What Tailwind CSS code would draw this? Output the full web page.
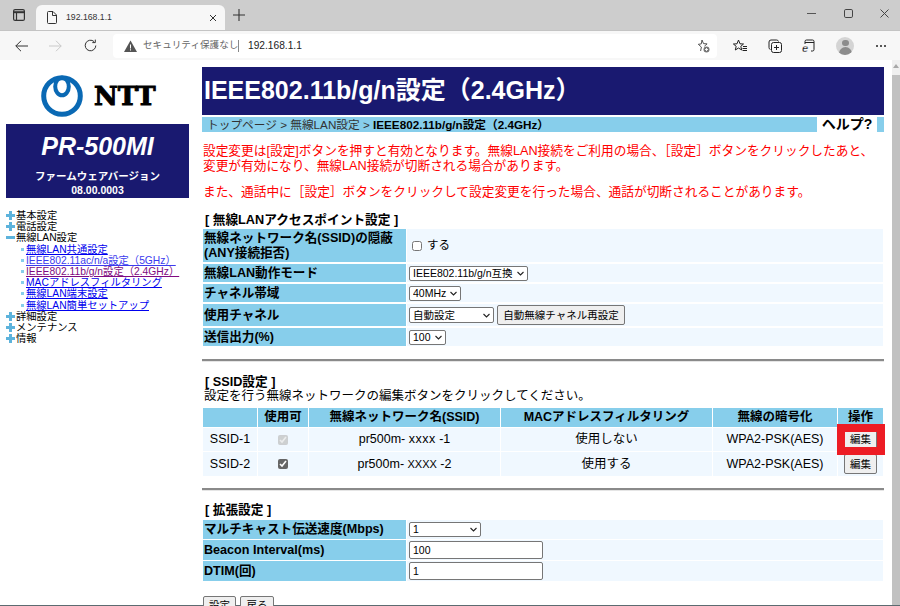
<!DOCTYPE html>
<html lang="ja">
<head>
  <meta charset="UTF-8">
  <title>192.168.1.1</title>
  <script src="https://cdn.jsdelivr.net/npm/@tailwindcss/browser@4"></script>
</head>
<body class="overflow-hidden bg-white font-['Liberation_Sans','Noto_Sans_CJK_JP',sans-serif] text-black">
<div class="relative flex h-[606px] w-[900px] flex-col overflow-hidden">

  <!-- tab strip -->
  <div class="flex h-[30px] shrink-0 items-end bg-[#cdcdcd]">
    <div class="flex h-[30px] w-[36px] items-center justify-center pl-[1px] pb-[1px]">
      <svg width="12" height="12" viewBox="0 0 12 12" fill="none" stroke="#333" stroke-width="1.2"><rect x=".6" y=".6" width="10.8" height="10.8" rx="1.5"/><path d="M.6 3.2h10.8" stroke-width="2"/><path d="M3.5 3v8"/></svg>
    </div>
    <div class="flex h-[25px] w-[189px] items-center rounded-t-[6px] bg-[#f7f7f7] pl-[11px] pr-[8px]">
      <svg width="10" height="13" viewBox="0 0 10 13" fill="none" stroke="#333" stroke-width="1"><path d="M.5 1.5a1 1 0 0 1 1-1h4.5l3.5 3.5v7.500a1 1 0 0 1-1 1h-7a1 1 0 0 1-1-1z"/><path d="M5.500.5v4h4"/></svg>
      <span class="ml-[9px] flex-1 text-[8.7px] text-[#333]">192.168.1.1</span>
      <svg width="8" height="8" viewBox="0 0 8 8" stroke="#333" stroke-width="1"><path d="M1 1l6 6M7 1l-6 6"/></svg>
    </div>
    <div class="flex h-[30px] w-[28px] items-center justify-center pb-[1px]">
      <svg width="12" height="12" viewBox="0 0 12 12" stroke="#333" stroke-width="1.1"><path d="M6 0v12M0 6h12"/></svg>
    </div>
    <div class="flex h-[30px] flex-1 items-center justify-end pb-[3px]">
      <svg class="mr-[28px]" width="9" height="9" viewBox="0 0 9 9" stroke="#555" stroke-width="1"><path d="M0 4.500h9"/></svg>
      <svg class="mr-[27px]" width="9" height="9" viewBox="0 0 9 9" fill="none" stroke="#444" stroke-width="1"><rect x=".5" y=".5" width="8" height="8" rx="1.300"/></svg>
      <svg class="mr-[11px]" width="9" height="9" viewBox="0 0 9 9" stroke="#444" stroke-width="1"><path d="M.5.5l8 8M8.500.5l-8 8"/></svg>
    </div>
  </div>

  <!-- toolbar -->
  <div class="flex h-[30px] shrink-0 items-center border-t border-[#c4c4c4] bg-[#f7f7f7]">
    <div class="flex w-[113px] items-center pl-[15px]">
      <svg width="13" height="12" viewBox="0 0 13 12" fill="none" stroke="#333" stroke-width="1"><path d="M13 6H.8M6 .8L.8 6 6 11.200"/></svg>
      <svg class="ml-[21px]" width="13" height="12" viewBox="0 0 13 12" fill="none" stroke="#c9c9c9" stroke-width="1"><path d="M0 6h12.200M7 .8L12.200 6 7 11.200"/></svg>
      <svg class="ml-[22px]" width="13" height="13" viewBox="0 0 13 13" fill="none" stroke="#333" stroke-width="1"><path d="M11.800 6.500a5.300 5.300 0 1 1-1.700-3.900M11.300.6v3h-3"/></svg>
    </div>
    <div class="flex h-[24px] w-[604px] items-center rounded-[4px] bg-white pl-[11px] pr-[7px]">
      <svg width="13" height="12" viewBox="0 0 13 12"><path d="M6.500.5L13 12H0z" fill="#555"/><path d="M6 4.500h1v4H6zM6 9.300h1v1.200H6z" fill="#fff"/></svg>
      <span class="ml-[6px] w-[95px] whitespace-nowrap text-[9.6px] text-[#666]">セキュリティ保護なし</span>
      <span class="h-[12px] w-px bg-[#888]"></span>
      <span class="ml-[9px] flex-1 text-[10.2px] text-[#222]">192.168.1.1</span>
      <svg width="14" height="14" viewBox="0 0 14 14" fill="none" stroke="#444" stroke-width=".9"><path d="M6 1l1.500 3.600 3.600.3-2.700 2.300M4.600 12l.8-3.900L2.300 5.300l3-.4L6 1"/><circle cx="10.500" cy="10.500" r="3" fill="#777" stroke="none"/><path d="M10.500 9v3M9 10.500h3" stroke="#fff"/></svg>
    </div>
    <div class="flex flex-1 items-center pl-[16px]">
      <svg width="14" height="14" viewBox="0 0 14 14" fill="none" stroke="#222" stroke-width="1"><path d="M5.500 1l1.500 3.800 3.500.2-2.700 2.300.9 3.700-3.200-2-3.200 2 .9-3.700L.4 5l3.600-.2z"/><path d="M10 7.500h4M9.500 9.500h4.500M9.500 11.500h4.500"/></svg>
      <svg class="ml-[21px]" width="14" height="14" viewBox="0 0 14 14" fill="none" stroke="#222" stroke-width="1"><path d="M2.500 10.500A2 2 0 0 1 1 8.500V3a2 2 0 0 1 2-2h5.500a2 2 0 0 1 2 1.500"/><rect x="3.500" y="3.500" width="10" height="10" rx="2"/><path d="M8.500 6v5M6 8.500h5"/></svg>
      <svg class="ml-[20px]" width="13" height="14" viewBox="0 0 13 14" fill="none" stroke="#222" stroke-width="1"><path d="M3 5V2.500a1.500 1.500 0 0 1 1.500-1.500h6A1.500 1.500 0 0 1 12 2.500v8a1.500 1.500 0 0 1-1.500 1.500H9M3 3.500h9"/><text x="0" y="13" font-family="Liberation Sans" font-size="11" font-weight="bold" font-style="italic" fill="#111" stroke="#f7f7f7" stroke-width=".4">e</text></svg>
      <div class="ml-[21px] flex h-[18px] w-[18px] flex-col items-center overflow-hidden rounded-full bg-[#d4d4d4]">
        <span class="mt-[3px] h-[7px] w-[7px] rounded-full bg-[#8c8c8c]"></span>
        <span class="mt-[1px] h-[8px] w-[13px] rounded-t-full bg-[#8c8c8c]"></span>
      </div>
      <div class="ml-[22px] flex gap-[2px]">
        <span class="h-[2px] w-[2px] rounded-full bg-[#222]"></span>
        <span class="h-[2px] w-[2px] rounded-full bg-[#222]"></span>
        <span class="h-[2px] w-[2px] rounded-full bg-[#222]"></span>
      </div>
    </div>
  </div>

  <!-- page -->
  <div class="flex min-h-0 flex-1 border-b border-[#5c6b70]">
    <!-- left menu -->
    <aside class="w-[202px] shrink-0 pt-[15px]">
      <div class="flex h-[42px] items-center pl-[41px]">
        <svg width="42" height="42" viewBox="0 0 42 42" fill="none" stroke="#0a69b4"><circle cx="21" cy="21" r="18.300" stroke-width="5"/><ellipse cx="21" cy="11.500" rx="6.800" ry="8.800" stroke-width="4"/></svg>
        <span class="ml-[11px] font-['DejaVu_Serif',serif] text-[26px] leading-none font-bold [-webkit-text-stroke:1px_black]">NTT</span>
      </div>
      <div class="mt-[7px] ml-[6px] flex h-[74px] w-[183px] flex-col items-center bg-[#191970] pt-[7px] text-white">
        <div class="text-[25px] leading-[30px] font-bold italic">PR-500MI</div>
        <div class="mt-[8px] text-[10.5px] leading-[14px] font-bold">ファームウェアバージョン</div>
        <div class="text-[10.5px] leading-[14px] font-bold">08.00.0003</div>
      </div>
      <nav class="mt-[12px] ml-[6px] text-[10.3px] leading-[11.200px] whitespace-nowrap">
        <div class="flex h-[11.200px] items-center"><span class="mr-[1px] h-[9px] w-[9px] shrink-0 bg-[linear-gradient(#5db3dc,#5db3dc),linear-gradient(#5db3dc,#5db3dc)] bg-[length:100%_3px,3px_100%] bg-center bg-no-repeat"></span>基本設定</div>
        <div class="flex h-[11.200px] items-center"><span class="mr-[1px] h-[9px] w-[9px] shrink-0 bg-[linear-gradient(#5db3dc,#5db3dc),linear-gradient(#5db3dc,#5db3dc)] bg-[length:100%_3px,3px_100%] bg-center bg-no-repeat"></span>電話設定</div>
        <div class="flex h-[11.200px] items-center"><span class="mr-[1px] h-[3px] w-[9px] shrink-0 bg-[#5db3dc]"></span>無線LAN設定</div>
        <div class="flex h-[11.200px] items-center pl-[15px]"><span class="mr-[2px] h-[3px] w-[3px] shrink-0 bg-[#87ceeb]"></span><a href="#" class="text-[#0000ee] underline">無線LAN共通設定</a></div>
        <div class="flex h-[11.200px] items-center pl-[15px]"><span class="mr-[2px] h-[3px] w-[3px] shrink-0 bg-[#87ceeb]"></span><a href="#" class="text-[#3b3bee] underline">IEEE802.11ac/n/a設定（5GHz）</a></div>
        <div class="flex h-[11.200px] items-center pl-[15px]"><span class="mr-[2px] h-[3px] w-[3px] shrink-0 bg-[#87ceeb]"></span><a href="#" class="text-[#800a80] underline">IEEE802.11b/g/n設定（2.4GHz）</a></div>
        <div class="flex h-[11.200px] items-center pl-[15px]"><span class="mr-[2px] h-[3px] w-[3px] shrink-0 bg-[#87ceeb]"></span><a href="#" class="text-[#0000ee] underline">MACアドレスフィルタリング</a></div>
        <div class="flex h-[11.200px] items-center pl-[15px]"><span class="mr-[2px] h-[3px] w-[3px] shrink-0 bg-[#87ceeb]"></span><a href="#" class="text-[#0000ee] underline">無線LAN端末設定</a></div>
        <div class="flex h-[11.200px] items-center pl-[15px]"><span class="mr-[2px] h-[3px] w-[3px] shrink-0 bg-[#87ceeb]"></span><a href="#" class="text-[#0000ee] underline">無線LAN簡単セットアップ</a></div>
        <div class="flex h-[11.200px] items-center"><span class="mr-[1px] h-[9px] w-[9px] shrink-0 bg-[linear-gradient(#5db3dc,#5db3dc),linear-gradient(#5db3dc,#5db3dc)] bg-[length:100%_3px,3px_100%] bg-center bg-no-repeat"></span>詳細設定</div>
        <div class="flex h-[11.200px] items-center"><span class="mr-[1px] h-[9px] w-[9px] shrink-0 bg-[linear-gradient(#5db3dc,#5db3dc),linear-gradient(#5db3dc,#5db3dc)] bg-[length:100%_3px,3px_100%] bg-center bg-no-repeat"></span>メンテナンス</div>
        <div class="flex h-[11.200px] items-center"><span class="mr-[1px] h-[9px] w-[9px] shrink-0 bg-[linear-gradient(#5db3dc,#5db3dc),linear-gradient(#5db3dc,#5db3dc)] bg-[length:100%_3px,3px_100%] bg-center bg-no-repeat"></span>情報</div>
      </nav>
    </aside>

    <!-- main -->
    <main class="w-[682px] shrink-0 pt-[7px]">
      <h1 class="flex h-[48px] items-center bg-[#191970] pl-[2px] text-[25px] font-bold text-white">IEEE802.11b/g/n設定（2.4GHz）</h1>
      <div class="mt-[2px] flex h-[15px] items-center bg-[#87ceeb] pl-[5px] text-[11.7px] whitespace-nowrap text-[#333]">
        <span class="w-[610px]">トップページ &gt; 無線LAN設定 &gt; <b class="text-black">IEEE802.11b/g/n設定（2.4GHz）</b></span>
        <span class="flex h-[15px] w-[60px] items-center justify-center bg-white text-[14px] font-bold text-black">ヘルプ?</span>
      </div>

      <div class="mt-[12px] pl-[1px] text-[12.7px] leading-[15px] whitespace-nowrap text-[#f00]">
        <p>設定変更は[設定]ボタンを押すと有効となります。無線LAN接続をご利用の場合、［設定］ボタンをクリックしたあと、</p>
        <p>変更が有効になり、無線LAN接続が切断される場合があります。</p>
        <p class="mt-[11px]">また、通話中に［設定］ボタンをクリックして設定変更を行った場合、通話が切断されることがあります。</p>
      </div>

      <h2 class="mt-[13px] pl-[3px] text-[12.7px] leading-[14px] font-bold">[ 無線LANアクセスポイント設定 ]</h2>
      <table class="w-[682px] table-fixed border-separate border-spacing-x-[1px] border-spacing-y-[2px] text-[12.6px] leading-[15px]">
        <colgroup><col class="w-[203px]"><col></colgroup>
        <tr class="h-[33px]">
          <th class="bg-[#87ceeb] pl-[1px] text-left font-bold">無線ネットワーク名(SSID)の隠蔽<br>(ANY接続拒否)</th>
          <td class="bg-[#f0f8ff] pl-[5px]"><label class="flex items-center"><input type="checkbox" class="h-[10px] w-[10px]"><span class="ml-[5px] text-[11.5px]">する</span></label></td>
        </tr>
        <tr class="h-[18px]">
          <th class="bg-[#87ceeb] pl-[1px] text-left font-bold">無線LAN動作モード</th>
          <td class="bg-[#f0f8ff] pl-[2px]"><span class="relative flex w-[119px]"><select class="h-[15px] w-full appearance-none rounded-[2px] border border-[#767676] bg-white pl-[3px] text-[10.5px] leading-[13px]"><option>IEEE802.11b/g/n互換</option></select><svg class="absolute top-[5px] right-[4px]" width="7" height="5" viewBox="0 0 7 5" fill="none" stroke="#222" stroke-width="1.100"><path d="M.5 1l3 3 3-3"/></svg></span></td>
        </tr>
        <tr class="h-[18px]">
          <th class="bg-[#87ceeb] pl-[1px] text-left font-bold">チャネル帯域</th>
          <td class="bg-[#f0f8ff] pl-[2px]"><span class="relative flex w-[52px]"><select class="h-[15px] w-full appearance-none rounded-[2px] border border-[#767676] bg-white pl-[3px] text-[10.5px] leading-[13px]"><option>40MHz</option></select><svg class="absolute top-[5px] right-[4px]" width="7" height="5" viewBox="0 0 7 5" fill="none" stroke="#222" stroke-width="1.100"><path d="M.5 1l3 3 3-3"/></svg></span></td>
        </tr>
        <tr class="h-[22px]">
          <th class="bg-[#87ceeb] pl-[1px] text-left font-bold">使用チャネル</th>
          <td class="bg-[#f0f8ff] pl-[2px]"><div class="flex items-center"><span class="relative flex w-[85px]"><select class="h-[16px] w-full appearance-none rounded-[2px] border border-[#767676] bg-white pl-[3px] text-[10.5px] leading-[13px]"><option>自動設定</option></select><svg class="absolute top-[6px] right-[4px]" width="7" height="5" viewBox="0 0 7 5" fill="none" stroke="#222" stroke-width="1.100"><path d="M.5 1l3 3 3-3"/></svg></span><button class="ml-[3px] h-[20px] w-[128px] rounded-[2px] border border-[#767676] bg-[#efefef] text-[10.5px]">自動無線チャネル再設定</button></div></td>
        </tr>
        <tr class="h-[18px]">
          <th class="bg-[#87ceeb] pl-[1px] text-left font-bold">送信出力(%)</th>
          <td class="bg-[#f0f8ff] pl-[2px]"><span class="relative flex w-[37px]"><select class="h-[15px] w-full appearance-none rounded-[2px] border border-[#767676] bg-white pl-[3px] text-[10.5px] leading-[13px]"><option>100</option></select><svg class="absolute top-[5px] right-[4px]" width="7" height="5" viewBox="0 0 7 5" fill="none" stroke="#222" stroke-width="1.100"><path d="M.5 1l3 3 3-3"/></svg></span></td>
        </tr>
      </table>

      <hr class="mt-[11px] border-0 border-t-2 border-b border-t-[#8a8a8a] border-b-[#e5e5e5]">

      <h2 class="mt-[13px] pl-[3px] text-[12.7px] leading-[14px] font-bold">[ SSID設定 ]</h2>
      <p class="pl-[2px] text-[12.500px] leading-[14px]">設定を行う無線ネットワークの編集ボタンをクリックしてください。</p>
      <table class="mt-[4px] w-[682px] table-fixed border-separate border-spacing-x-[1px] border-spacing-y-[1px] text-center text-[12.500px] leading-[15px]">
        <colgroup><col class="w-[54px]"><col class="w-[50px]"><col class="w-[191px]"><col class="w-[211px]"><col class="w-[124px]"><col></colgroup>
        <tr class="h-[19px] bg-[#87ceeb] font-bold">
          <th></th><th>使用可</th><th>無線ネットワーク名(SSID)</th><th>MACアドレスフィルタリング</th><th>無線の暗号化</th><th>操作</th>
        </tr>
        <tr class="h-[23px] bg-[#f0f8ff]">
          <td>SSID-1</td>
          <td><input type="checkbox" checked disabled class="h-[10px] w-[10px] align-middle"></td>
          <td>pr500m- <span class="tracking-[0.5px]">xxxx</span> -1</td>
          <td>使用しない</td>
          <td>WPA2-PSK(AES)</td>
          <td><button class="h-[20px] w-[33px] rounded-[2px] border border-[#767676] bg-[#efefef] text-[10.5px]">編集</button></td>
        </tr>
        <tr class="h-[24px] bg-[#f0f8ff]">
          <td>SSID-2</td>
          <td><input type="checkbox" checked class="h-[10px] w-[10px] align-middle accent-[#666]"></td>
          <td>pr500m- <span class="text-[11px]">XXXX</span> -2</td>
          <td>使用する</td>
          <td>WPA2-PSK(AES)</td>
          <td><button class="h-[20px] w-[33px] rounded-[2px] border border-[#767676] bg-[#efefef] text-[10.5px]">編集</button></td>
        </tr>
      </table>

      <hr class="mt-[11px] border-0 border-t-2 border-b border-t-[#8a8a8a] border-b-[#e5e5e5]">

      <h2 class="mt-[12px] pl-[3px] text-[12.7px] leading-[14px] font-bold">[ 拡張設定 ]</h2>
      <table class="mt-[2px] w-[682px] table-fixed border-separate border-spacing-x-[1px] border-spacing-y-[1.500px] text-[12.6px] leading-[15px]">
        <colgroup><col class="w-[203px]"><col></colgroup>
        <tr class="h-[19px]">
          <th class="bg-[#87ceeb] pl-[1px] text-left font-bold">マルチキャスト伝送速度(Mbps)</th>
          <td class="bg-[#f0f8ff] pl-[2px]"><span class="relative flex w-[72px]"><select class="h-[15px] w-full appearance-none rounded-[2px] border border-[#767676] bg-white pl-[3px] text-[10.5px] leading-[13px]"><option>1</option></select><svg class="absolute top-[5px] right-[4px]" width="7" height="5" viewBox="0 0 7 5" fill="none" stroke="#222" stroke-width="1.100"><path d="M.5 1l3 3 3-3"/></svg></span></td>
        </tr>
        <tr class="h-[20px]">
          <th class="bg-[#87ceeb] pl-[1px] text-left font-bold">Beacon Interval(ms)</th>
          <td class="bg-[#f0f8ff] pl-[2px]"><input type="text" value="100" class="block h-[18px] w-[134px] rounded-[2px] border border-[#767676] bg-white px-[3px] text-[10.5px]"></td>
        </tr>
        <tr class="h-[20px]">
          <th class="bg-[#87ceeb] pl-[1px] text-left font-bold">DTIM(回)</th>
          <td class="bg-[#f0f8ff] pl-[2px]"><input type="text" value="1" class="block h-[18px] w-[134px] rounded-[2px] border border-[#767676] bg-white px-[3px] text-[10.5px]"></td>
        </tr>
      </table>
      <div class="mt-[14px] flex gap-[4px] pl-[1px]">
        <button class="h-[20px] w-[33px] rounded-[2px] border border-[#767676] bg-[#efefef] text-[10.5px]">設定</button>
        <button class="h-[20px] w-[34px] rounded-[2px] border border-[#767676] bg-[#efefef] text-[10.5px]">戻る</button>
      </div>
    </main>

    <!-- scrollbar -->
    <div class="ml-[8px] flex w-[8px] shrink-0 flex-col bg-[#f0f0f0]">
      <div class="flex h-[15px] items-start justify-center pt-[4px]"><span class="border-x-[3px] border-b-[4px] border-x-transparent border-b-[#a8a8a8]"></span></div>
      <div class="flex-1 bg-[#c1c1c1]"></div>
    </div>
  </div>

  <!-- red callout on the edit button -->
  <div class="absolute top-[424px] left-[837px] h-[31px] w-[48px] border-8 border-[#ed1c24]"></div>
</div>
</body>
</html>
